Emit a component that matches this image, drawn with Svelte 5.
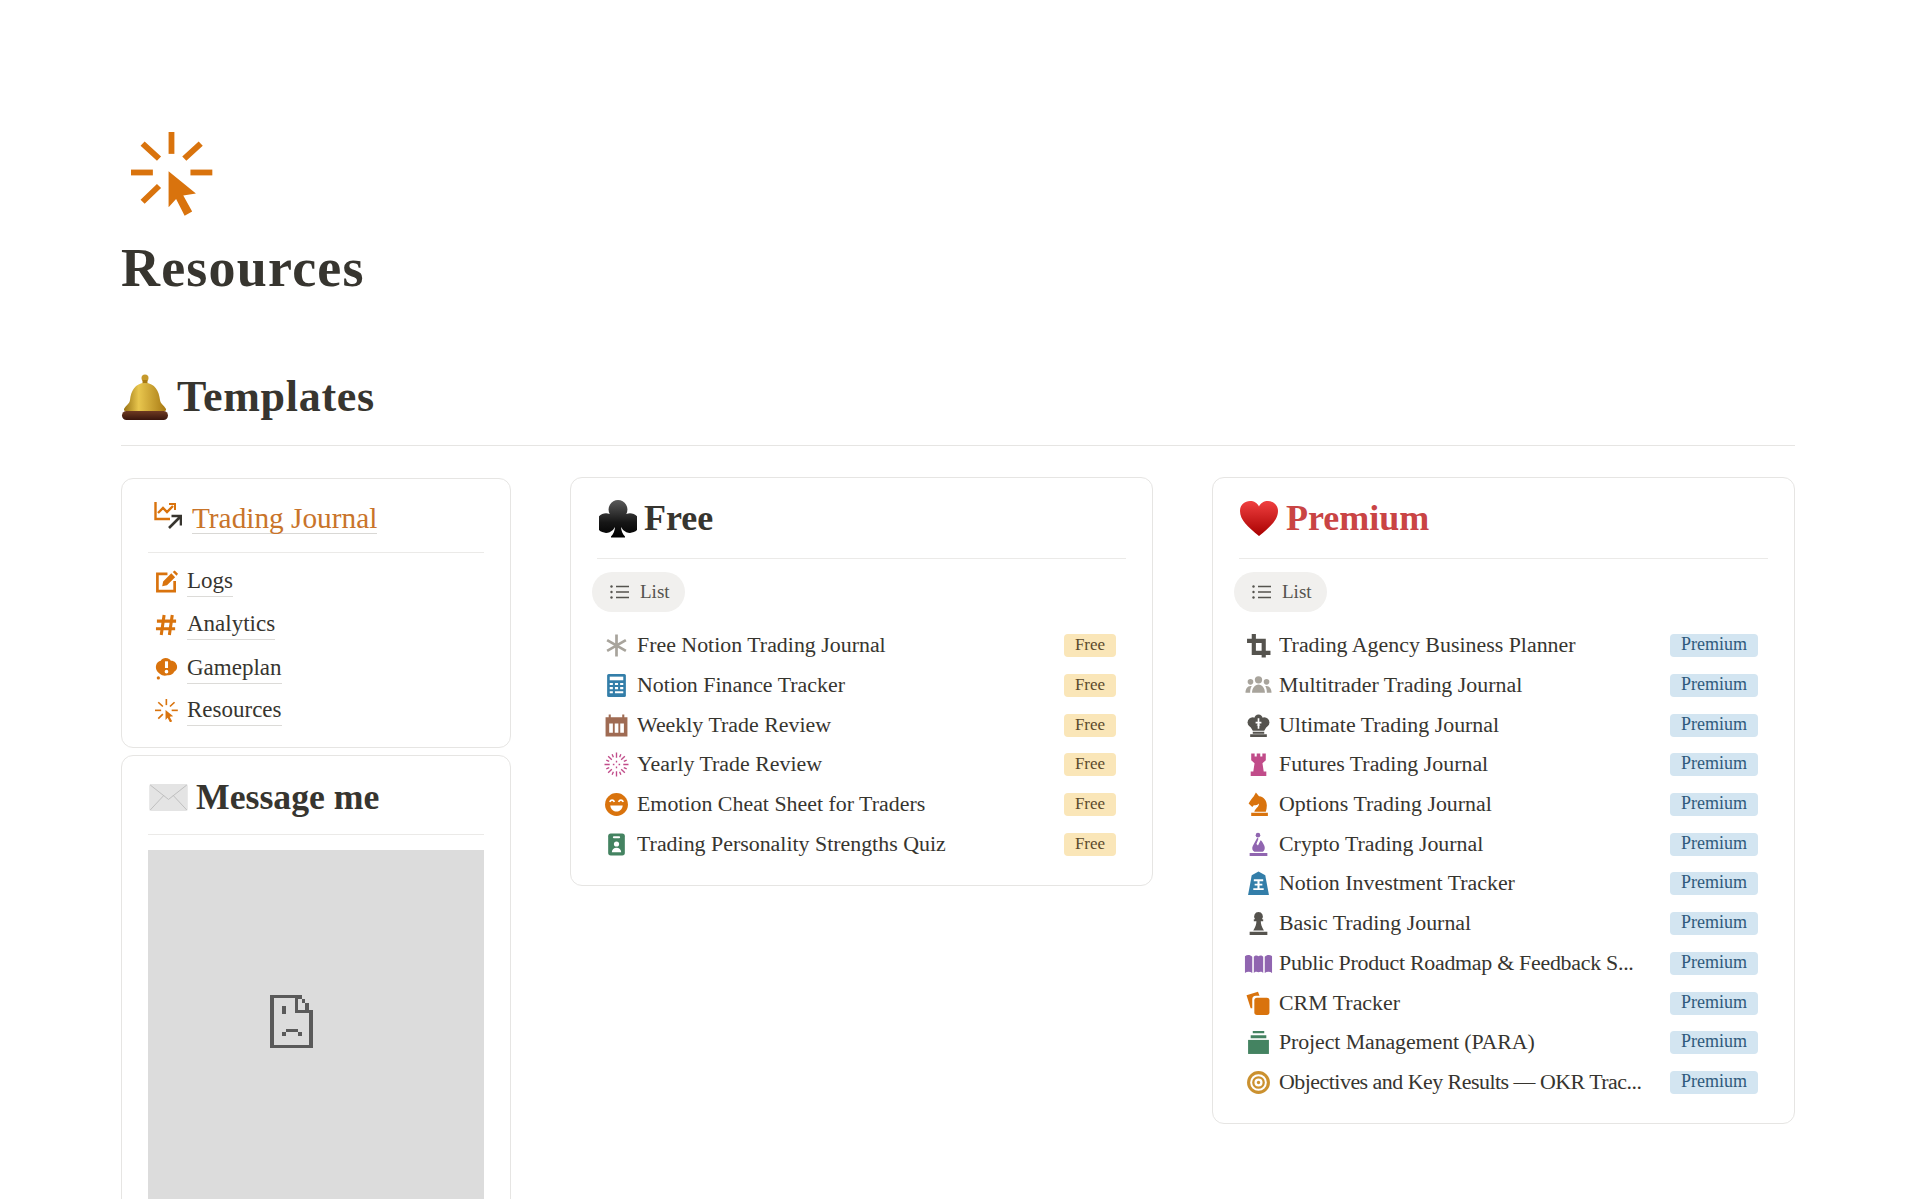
<script>
  const free = [
    ['asterisk', 'Free Notion Trading Journal'],
    ['calc', 'Notion Finance Tracker'],
    ['cal', 'Weekly Trade Review'],
    ['burst', 'Yearly Trade Review'],
    ['smile', 'Emotion Cheat Sheet for Traders'],
    ['badge', 'Trading Personality Strengths Quiz']
  ];
  const premium = [
    ['crop', 'Trading Agency Business Planner'],
    ['people', 'Multitrader Trading Journal'],
    ['king', 'Ultimate Trading Journal'],
    ['rook', 'Futures Trading Journal'],
    ['knight', 'Options Trading Journal'],
    ['bishop', 'Crypto Trading Journal'],
    ['bank', 'Notion Investment Tracker'],
    ['pawn', 'Basic Trading Journal'],
    ['map', 'Public Product Roadmap & Feedback S...', -0.27],
    ['cards', 'CRM Tracker'],
    ['stack', 'Project Management (PARA)', -0.1],
    ['target', 'Objectives and Key Results — OKR Trac...', -0.5]
  ];
  const nav = [['edit', 'Logs', 41], ['hash', 'Analytics', 45], ['alert', 'Gameplan', 42], ['click', 'Resources', 42]];
</script>

{#snippet icon(n)}
  <svg class="ic" viewBox="0 0 24 24" aria-hidden="true">
    {#if n === 'asterisk'}
      <path d="M12 1.500v21M3 6.800l18 10.400M21 6.800 3 17.200" stroke="#a8a49c" stroke-width="2.600" fill="none"/>
    {:else if n === 'calc'}
      <rect x="3" y="1" width="18" height="22" rx="1.500" fill="#337ea9"/>
      <rect x="5.500" y="3.500" width="13" height="3.500" fill="#fff"/>
      <path d="M5.500 10.500h3M10.500 10.500h3M15.500 10.500h3M5.500 14.500h3M10.500 14.500h3M15.500 14.500h3M5.500 18.500h3M10.500 18.500h8" stroke="#fff" stroke-width="2"/>
    {:else if n === 'cal'}
      <path d="M1.500 4h3V1.500h2V4h11V1.500h2V4h3v18.500h-21z" fill="#9f6b53"/>
      <path d="M5 10h3.500v9H5zM10.300 10h3.500v9h-3.500zM15.600 10h3.500v9h-3.500z" fill="#fff"/>
    {:else if n === 'burst'}
      <g stroke="#c14c8a" stroke-width="1.300">
        <path d="M12 .5v5M12 18.500v5M.5 12h5M18.500 12h5M4 4l3.500 3.500M16.500 16.500 20 20M20 4l-3.500 3.500M7.500 16.500 4 20"/>
        <path d="M7.800 2.200 9 5M16.200 2.200 15 5M7.800 21.800 9 19M16.200 21.800 15 19M2.200 7.800 5 9M2.200 16.200 5 15M21.800 7.800 19 9M21.800 16.200 19 15M12 8.500v1.500M12 14v1.500M8.500 12H10M14 12h1.500"/>
      </g>
    {:else if n === 'smile'}
      <circle cx="12" cy="12" r="11" fill="#d9730d"/>
      <path d="M5.500 9.500c1.200-2.400 3.300-2.400 4.500 0M14 9.500c1.200-2.400 3.300-2.400 4.500 0" stroke="#fff" stroke-width="1.700" fill="none"/>
      <path d="M6 13h12c-.5 4-3.300 5.800-6 5.800S6.500 17 6 13z" fill="#fff"/>
    {:else if n === 'badge'}
      <rect x="4" y="1.500" width="16" height="21" rx="2.500" fill="#448361"/>
      <rect x="8.500" y="4" width="7" height="2" rx="1" fill="#fff"/>
      <circle cx="12" cy="11.500" r="2.500" fill="#fff"/>
      <path d="M7.500 19.500c0-3 2-4.500 4.500-4.500s4.500 1.500 4.500 4.500z" fill="#fff"/>
    {:else if n === 'crop'}
      <path d="M5.500 1h4v4.500H19v11.500h4.500v4H19v2.500h-4V21H5.500V9.500H1v-4h4.500zM9.500 9.500V17H15V9.500z" fill="#55534e" fill-rule="evenodd"/>
    {:else if n === 'people'}
      <g fill="#a8a49c">
        <circle cx="12" cy="6.500" r="3.500"/><circle cx="4.300" cy="8.500" r="2.700"/><circle cx="19.700" cy="8.500" r="2.700"/>
        <path d="M5.800 19c0-4.500 2.700-8 6.200-8s6.200 3.500 6.200 8zM-.5 19c0-3.500 1.800-6.500 4.800-6.500.5 0 .9.100 1.200.2C4.200 14.400 4 17 4 19zM24.500 19c0-3.500-1.800-6.500-4.800-6.500-.5 0-.9.100-1.200.2 1.300 1.700 1.500 4.300 1.500 6.300z"/>
      </g>
    {:else if n === 'king'}
      <g fill="#55534e">
        <circle cx="6.500" cy="9" r="5"/><circle cx="17.500" cy="9" r="5"/><circle cx="12" cy="5.500" r="4"/>
        <path d="M3.500 12h17L17.500 17h-11zM6.500 18h11v1.800h-11zM4 20.500h16V23H4z"/>
      </g>
      <path d="M11.200 5h1.600v3.500h2v1.500h-2v5h-1.600v-5h-2V8.500h2z" fill="#fff"/>
    {:else if n === 'rook'}
      <path d="M5 1.500h3.300v2.700h2V1.500h3.400v2.700h2V1.500H19v6.500l-3.200 2.700 1.200 8h2.500V23H4.500v-4.300H7l1.200-8L5 8z" fill="#c14c8a"/>
    {:else if n === 'knight'}
      <path d="M9.500.5 12.500 4c5 .5 7.500 4.500 7.500 9 0 2-.4 4-1 6H8c.5-3 4.500-4.500 4.500-8-1.500 1.500-3 1.700-5 1.700L6 14.500 2.500 11C4 8 6 6 7.500 4zM5 20h16v3H5z" fill="#d9730d"/>
    {:else if n === 'bishop'}
      <circle cx="11.500" cy="3" r="2.200" fill="#9065b0"/>
      <path d="M10.800 5.500 6.500 13.500c-1.200 2.500-.2 4.500 1.500 5.500h8c2.500-1.500 2.500-4.500 1-7-1-1.800-2-3.500-3-4L11.500 13l-1.500-1.500L12 6.500zM3.500 20.200h17V23h-17z" fill="#9065b0"/>
    {:else if n === 'bank'}
      <path d="M5.500 4 12 .5 18.500 4 22 23H2z" fill="#337ea9"/>
      <path d="M7.500 8h9v1.800h-3.500v2.400h2.700V14h-2.700v2.500h4V18.300H7v-1.800h4V14H8.300v-1.800H11V9.800H7.500z" fill="#fff"/>
    {:else if n === 'pawn'}
      <path d="M12 1a4.200 4.200 0 0 1 3.300 6.800h1.200v2h-2.300c0 3 1 5.500 3 8.800H7c2-3.300 3-5.800 3-8.800H7.500v-2h1.200A4.200 4.200 0 0 1 12 1zM3.500 20h17v3h-17z" fill="#55534e"/>
    {:else if n === 'map'}
      <path d="M-1 5c2-1.500 5-1.500 7 .5V21c-2-1.500-5-1.500-7 0zM7.500 5.500c1.200-1.500 3.300-1.500 4.500-.5 1.200-1 3.300-1 4.500.5V21c-1.200-1.500-3.300-1.500-4.500-.5-1.200-1-3.300-1-4.500.5zM18 5.500c2-2 5-2 7-.5v16c-2-1.500-5-1.500-7 0z" fill="#9065b0"/>
    {:else if n === 'cards'}
      <path d="M.5 4 11.500.8 13 4.500H9.500a3.500 3.500 0 0 0-3.500 3.500v8.500H4.500z" fill="#d9730d"/>
      <rect x="8" y="6.500" width="14.500" height="16.500" rx="2.500" fill="#d9730d"/>
    {:else if n === 'stack'}
      <path d="M6.500 1h11v2h-11zM4.500 5h15v3h-15z" fill="#448361"/>
      <rect x="2" y="9.500" width="20" height="13.500" fill="#448361"/>
    {:else if n === 'target'}
      <circle cx="12" cy="12" r="9.500" fill="none" stroke="#cb912f" stroke-width="3"/>
      <circle cx="12" cy="12" r="5" fill="none" stroke="#cb912f" stroke-width="2.200"/>
      <circle cx="12" cy="12" r="1.600" fill="#cb912f"/>
    {:else if n === 'edit'}
      <path d="M13 4H2.500v18h18V11.500" fill="none" stroke="#d9730d" stroke-width="2.800"/>
      <path d="M7.500 17l1-5L17 3.500l4 4L12.500 16zM18.500 2l2-1.500L24 4l-1.500 2z" fill="#d9730d"/>
    {:else if n === 'hash'}
      <path d="M9.500 2 6.500 23M18 2l-3 21M2 8.500h20M1 16.500h20" stroke="#d9730d" stroke-width="3.200" fill="none"/>
    {:else if n === 'alert'}
      <path d="M11 1c3 0 5 1.500 5.500 3 3-.3 6 2 6.500 5.500.5 3-1 5-3 6-1 2.500-4 4-7 3.500-2.500 1-6 .5-8-1.500C2.500 16 .5 13 1 9.500 1.500 6 4 4.500 6 4c1-2 3-3 5-3z" fill="#d9730d"/>
      <circle cx="3.500" cy="21.800" r="1.700" fill="#d9730d"/>
      <path d="M12 4.500v7" stroke="#fff" stroke-width="3.200"/>
      <circle cx="12" cy="15.300" r="1.900" fill="#fff"/>
    {:else if n === 'click'}
      <g fill="#d9730d">
        <rect x="11" y="0" width="1.700" height="6.400"/>
        <rect x="0" y="11" width="6.400" height="1.700"/>
        <rect x="17.400" y="11" width="6.400" height="1.700"/>
        <path d="M4 2.800 8.800 7.200 7.600 8.400 2.800 4zM19.800 2.800 21 4l-4.800 4.400-1.200-1.200zM7.600 15.200l1.200 1.200L4 21 2.800 19.800z"/>
        <path d="M11 11.500 19 18l-3.700.6 2.600 4.700-2.200 1.200-2.500-4.900L11 22z"/>
      </g>
    {/if}
  </svg>
{/snippet}

{#snippet listIcon()}
  <svg class="li" viewBox="0 0 20 16" aria-hidden="true">
    <path d="M6 2.500h13M6 8h13M6 13.500h13" stroke="#55534e" stroke-width="1.400"/>
    <circle cx="1.500" cy="2.500" r="1.200" fill="#55534e"/><circle cx="1.500" cy="8" r="1.200" fill="#55534e"/><circle cx="1.500" cy="13.500" r="1.200" fill="#55534e"/>
  </svg>
{/snippet}

<main class="page">
  <svg class="pageicon" viewBox="0 0 24 24" aria-hidden="true">
    <g fill="#d9730d">
      <rect x="11" y="0" width="1.700" height="6.400"/>
      <rect x="0" y="11" width="6.400" height="1.700"/>
      <rect x="17.400" y="11" width="6.400" height="1.700"/>
      <path d="M4 2.800 8.800 7.200 7.600 8.400 2.800 4zM19.800 2.800 21 4l-4.800 4.400-1.200-1.200zM7.600 15.200l1.200 1.200L4 21 2.800 19.800z"/>
      <path d="M11 11.500 19 18l-3.700.6 2.600 4.700-2.200 1.200-2.500-4.900L11 22z"/>
    </g>
  </svg>
  <h1>Resources</h1>

  <h2 class="section"><span class="emoji bell">
    <svg viewBox="0 0 48 46" aria-hidden="true">
      <defs>
        <linearGradient id="gold" x1="0" x2="1" y1="0" y2="0"><stop offset="0" stop-color="#9a7414"/><stop offset=".35" stop-color="#e8c64e"/><stop offset="1" stop-color="#a87a14"/></linearGradient>
        <linearGradient id="wood" x1="0" x2="0" y1="0" y2="1"><stop offset="0" stop-color="#6e3a22"/><stop offset="1" stop-color="#38150d"/></linearGradient>
      </defs>
      <circle cx="24" cy="4" r="3.500" fill="#c69a2c"/>
      <rect x="21.500" y="6" width="5" height="4" fill="#a87a14"/>
      <path d="M24 9c10 0 14 8 15 17 .4 4 4 5 6 9 .3 1-.5 2-1 2H4c-.5 0-1.300-1-1-2 2-4 5.600-5 6-9C10 17 14 9 24 9z" fill="url(#gold)"/>
      <rect x="1" y="37" width="46" height="9" rx="4.500" fill="url(#wood)"/>
    </svg>
  </span>Templates</h2>

  <div class="cols">
    <div class="left">
      <section class="card nav">
        <div class="navhead">
          <svg class="tj" viewBox="0 0 28 28" aria-hidden="true">
            <path d="M1.500 0v17H16" fill="none" stroke="#d9730d" stroke-width="2.400"/>
            <path d="M4 11l5-5 4 4 6-6" fill="none" stroke="#d9730d" stroke-width="2.400"/>
            <path d="M15 2h6v6" fill="none" stroke="#d9730d" stroke-width="2"/>
            <path d="M15 26 26 15M17.500 14H27v9.500" fill="none" stroke="#37352f" stroke-width="2.600"/>
          </svg>
          <a class="tjlink" href="#top">Trading Journal</a>
        </div>
        <hr />
        <ul class="navlist">
          {#each nav as [n, t, h]}
            <li style="height: {h}px">{@render icon(n)}<a href="#top">{t}</a></li>
          {/each}
        </ul>
      </section>

      <section class="card msg">
        <h3><span class="emoji mail">
          <svg viewBox="0 0 40 28" aria-hidden="true">
            <rect width="40" height="28" rx="2" fill="#e4e4e4"/>
            <path d="M1 1l19 15L39 1M1 27l14-15M39 27 25 12" fill="none" stroke="#bdbdbd" stroke-width="1"/>
          </svg>
        </span>Message me</h3>
        <hr />
        <div class="embed">
          <svg class="sad" width="43" height="53" viewBox="0 0 43 53" shape-rendering="crispEdges" aria-hidden="true">
            <path fill="#5a5a5a" d="M0 0h28v3h-24v47h35V15h4v38H0zM25 3h3v12h15v3H25zM28 0h4v4h-4zM32 4h3v4h-3zM35 8h4v7h-4zM12 11h4v8h-4zM16 34h12v3H16zM12 37h4v4h-4zM28 37h4v4h-4z"/>
          </svg>
        </div>
      </section>
    </div>

    <section class="card big">
      <h3><span class="emoji club">
        <svg viewBox="0 0 38 38" aria-hidden="true">
          <defs><linearGradient id="clb" x1="0" x2="0" y1="0" y2="1"><stop offset="0" stop-color="#5a5a5a"/><stop offset=".6" stop-color="#161616"/><stop offset="1" stop-color="#000"/></linearGradient></defs>
          <path d="M19 0a9.500 9.500 0 0 1 8.300 14A9.800 9.800 0 1 1 22 27c.3 4 1.500 7 4 9.500v1H12v-1c2.500-2.500 3.700-5.500 4-9.500A9.800 9.800 0 1 1 10.700 14 9.500 9.500 0 0 1 19 0z" fill="url(#clb)"/>
        </svg>
      </span>Free</h3>
      <hr />
      <div class="pill">{@render listIcon()}<span>List</span></div>
      <ul class="rows">
        {#each free as [n, t]}
          <li>{@render icon(n)}<span class="name">{t}</span><span class="tag free">Free</span></li>
        {/each}
      </ul>
    </section>

    <section class="card big">
      <h3 class="red"><span class="emoji heart">
        <svg viewBox="0 0 38 36" aria-hidden="true">
          <defs><linearGradient id="hrt" x1="0" x2="0" y1="0" y2="1"><stop offset="0" stop-color="#f04040"/><stop offset="1" stop-color="#a80000"/></linearGradient></defs>
          <path d="M19 35C8 26 0 19 0 10 0 4 4.500 0 10 0c4 0 7.500 2 9 5.500C20.500 2 24 0 28 0c5.500 0 10 4 10 10 0 9-8 16-19 25z" fill="url(#hrt)"/>
        </svg>
      </span>Premium</h3>
      <hr />
      <div class="pill">{@render listIcon()}<span>List</span></div>
      <ul class="rows">
        {#each premium as [n, t, ls]}
          <li>{@render icon(n)}<span class="name" style="letter-spacing: {ls ?? 0}px">{t}</span><span class="tag prem">Premium</span></li>
        {/each}
      </ul>
    </section>
  </div>
</main>

<style>
  :global(body) { margin: 0; background: #fff; overflow: hidden; }
  :global(html) { overflow: hidden; }
  .page {
    height: 1199px;
    overflow: hidden;
    box-sizing: border-box;
    padding: 130px 125px 0 121px;
    font-family: "Liberation Serif", serif;
    color: #37352f;
  }
  .pageicon { display: block; width: 82px; height: 86px; margin-left: 10px; }
  h1 { margin: 22px 0 0; font-size: 54px; line-height: 60px; font-weight: 700; letter-spacing: 1.200px; color: #37352f; }
  .section {
    display: flex; align-items: center; gap: 8px;
    margin: 75px 0 0; padding-bottom: 24px;
    font-size: 44px; line-height: 48px; font-weight: 700; letter-spacing: .7px;
    border-bottom: 1px solid #e6e5e3;
  }
  .emoji { display: inline-flex; flex: none; }
  .emoji svg { display: block; width: 100%; height: 100%; }
  .bell { width: 48px; height: 46px; }
  .cols {
    display: grid; grid-template-columns: 390px 583px 583px; column-gap: 59px;
    margin-top: 31px; align-items: start;
  }
  .left { display: flex; flex-direction: column; gap: 7px; margin-top: 1px; }
  .card { border: 1.500px solid #e6e5e3; border-radius: 12px; box-sizing: border-box; background: #fff; }
  .nav { height: 270px; padding: 17px 26px 0; }
  .navhead { display: flex; align-items: center; gap: 10px; height: 44px; padding-left: 5px; margin-left: 1px; }
  .tj { width: 28px; height: 28px; flex: none; margin-bottom: 4px; }
  .tjlink { font-size: 29.300px; color: #c9742a; text-decoration: none; border-bottom: 1px solid #d9d8d5; line-height: 30px; }
  hr { border: 0; border-top: 1.500px solid #ebeae8; margin: 0; }
  .nav hr { margin-top: 12px; }
  .navlist { list-style: none; margin: 8px 0 0; padding: 0 0 0 7px; }
  .navlist li { display: flex; align-items: center; gap: 9px; }
  .navlist .ic { width: 23px; height: 23px; }
  .navlist a { font-size: 23px; line-height: 30px; color: #37352f; text-decoration: none; border-bottom: 1px solid #dcdbd8; }
  .msg { height: 700px; padding: 17px 26px 0; }
  h3 { display: flex; align-items: center; margin: 0; font-size: 36px; line-height: 48px; font-weight: 700; color: #37352f; }
  .msg h3 { font-size: 35.700px; }
  .mail { width: 39px; height: 27px; margin-right: 8px; margin-left: 1px; }
  .msg hr { margin-top: 13px; }
  .embed { display: flex; justify-content: center; margin-top: 15px; background: #dcdcdc; height: 600px; padding-top: 145px; box-sizing: border-box; padding-right: 50px; }
  .big { padding: 16px 26px 0 21px; }
  .big h3 { padding-left: 5px; }
  .big hr { margin: 16px 0 0 5px; }
  .club { width: 38px; height: 38px; margin: 2px 7px 0 2px; }
  .heart { width: 38px; height: 36px; margin: 2px 8px 0 1px; }
  .red { color: #c94444; }
  .pill {
    display: inline-flex; align-items: center; gap: 10px;
    height: 40px; margin-top: 13px; padding: 0 15px 0 18px;
    background: #f1f0ee; border-radius: 20px; font-size: 19px; color: #55534e;
  }
  .li { width: 20px; height: 16px; }
  .rows { list-style: none; margin: 14px 0 21px; padding: 0; }
  .rows li { display: flex; align-items: center; height: 39.700px; padding-left: 12px; }
  .rows .ic { width: 25px; height: 25px; flex: none; overflow: visible; }
  .name { flex: 1; min-width: 0; margin: 0 0 1px 8px; font-size: 21.900px; white-space: nowrap; overflow: hidden; color: #37352f; }
  .tag { flex: none; height: 23px; line-height: 21px; border-radius: 4px; font-size: 17px; box-sizing: border-box; margin-right: 10px; text-align: center; }
  .free { background: #fae6b8; color: #5c4a2c; width: 52px; }
  .prem { background: #d3e5f1; color: #2f5a7c; width: 88px; font-size: 18px; }
</style>
